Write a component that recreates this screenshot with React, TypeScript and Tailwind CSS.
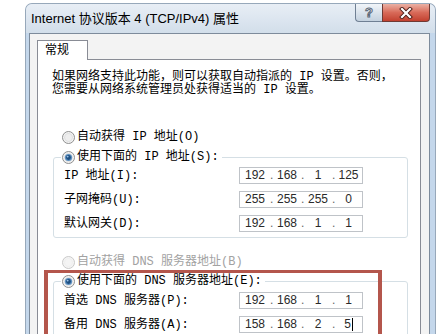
import React from 'react'

// SimSun-like mix: mono latin + CJK
const bodyFont = "font-['Liberation_Mono','Noto_Sans_CJK_SC',monospace]"

function Radio({ checked, disabled }: { checked?: boolean; disabled?: boolean }) {
  const ring = disabled ? '#c9c9c9' : '#8e8f8f'
  return (
    <svg width="13" height="13" viewBox="0 0 13 13" className="shrink-0">
      <circle cx="6.5" cy="6.5" r="6" fill={disabled ? '#f4f4f4' : '#f2f2f2'} stroke={ring} strokeWidth="1" />
      <circle cx="6.5" cy="6.5" r="4.2" fill={disabled ? '#ededed' : '#d9dadb'} />
      <circle cx="6.5" cy="6.5" r="3.4" fill={disabled ? '#f4f4f4' : '#eeeeee'} />
      {checked && (
        <>
          <circle cx="6.5" cy="6.5" r="3.6" fill="#5b8fc0" />
          <circle cx="6.5" cy="6.5" r="2.4" fill="#1f4f80" />
          <circle cx="5.7" cy="5.6" r="0.9" fill="#9cc2e6" />
        </>
      )}
    </svg>
  )
}

function IpBox({ parts, caret }: { parts: string[]; caret?: boolean }) {
  const widths = ['w-[30px]', 'w-[28px]', 'w-[28px]', 'w-[27px]']
  return (
    <div className="flex h-[17px] w-[124px] items-center border border-[#bfc3c8] bg-white font-['Liberation_Sans',sans-serif] text-[12px] leading-[15px] text-[#2a2a2a]">
      {parts.map((p, i) => (
        <React.Fragment key={i}>
          {i > 0 && <span className="w-[3px] text-center text-[#666]">.</span>}
          <span className={`${widths[i]} text-center`}>
            {p}
            {caret && i === 3 && <span className="ml-[1px] inline-block h-[13px] w-px bg-black align-middle" />}
          </span>
        </React.Fragment>
      ))}
    </div>
  )
}

function Row({ label, parts, caret }: { label: string; parts: string[]; caret?: boolean }) {
  return (
    <div className="flex h-[17px] items-center">
      <div className="w-[175px] leading-[12px]">{label}</div>
      <IpBox parts={parts} caret={caret} />
    </div>
  )
}

function Group({ title, children }: { title: string; children: React.ReactNode }) {
  return (
    <fieldset className="ml-[15px] w-[355px] rounded-[3px] border border-[#d5dfe5] pb-[5px]">
      <legend className="ml-[7px] px-[1px]">
        <div className="flex h-[16px] items-center gap-[2px] pr-[2px]">
          <Radio checked />
          <span className="leading-[12px]">{title}</span>
        </div>
      </legend>
      {children}
    </fieldset>
  )
}

export default function App() {
  return (
    <div className={`relative h-[334px] w-[441px] overflow-hidden bg-white text-[12px] text-black ${bodyFont}`}>
      {/* Window */}
      <div className="ml-[25px] mt-[3px] w-[411px] rounded-t-[7px] border-x border-t border-[#97a8ba] bg-[#c4d7eb]">
        {/* Title bar */}
        <div className="flex h-[29px] items-start justify-between rounded-t-[6px] bg-gradient-to-b from-[#e8eef5] via-[#dde6f0] to-[#d2deea]">
          <div className="self-center pl-[5px] pt-[1px] font-['Liberation_Sans','Noto_Sans_CJK_SC',sans-serif] text-[13px] text-black">
            Internet 协议版本 4 (TCP/IPv4) 属性
          </div>
          <div className="mr-[5px] flex">
            <div className="flex h-[18px] w-[27px] items-center justify-center rounded-bl-[4px] border-b border-l border-[#6f7f93] bg-gradient-to-b from-[#f1f5f9] to-[#c4d1df]">
              <span className="font-['Liberation_Sans',sans-serif] text-[13px] font-bold leading-none text-white [-webkit-text-stroke:1px_#5b6777]">?</span>
            </div>
            <div className="flex h-[18px] w-[48px] items-center justify-center rounded-br-[4px] border border-t-0 border-[#6f3a34] bg-gradient-to-b from-[#eab0a4] via-[#d86a59] to-[#c2402f]">
              <svg width="14" height="12" viewBox="0 0 14 12">
                <path d="M3 2 L11 10 M11 2 L3 10" stroke="#4a1d18" strokeWidth="4" strokeLinecap="square" />
                <path d="M3 2 L11 10 M11 2 L3 10" stroke="#ffffff" strokeWidth="2.2" strokeLinecap="square" />
              </svg>
            </div>
          </div>
        </div>

        {/* Client area */}
        <div className="pl-[3px] pr-[5px]">
          <div className="h-[310px] border-x border-t border-[#7d8b9b] bg-[#f3f3f3] pl-[7px] pr-[8px] pt-[6px]">
            {/* Tab */}
            <div className="relative z-10 -mb-px flex h-[20px] w-[51px] items-center border-x border-t border-[#898c95] bg-white pl-[7px] leading-[12px]">
              常规
            </div>
            {/* Tab page */}
            <div className="h-[300px] border border-[#898c95] bg-white">
              <p className="ml-[14px] mt-[11px] leading-[13px]">
                如果网络支持此功能，则可以获取自动指派的 IP 设置。否则，
                <br />
                您需要从网络系统管理员处获得适当的 IP 设置。
              </p>

              <div className="ml-[24px] mt-[32px] flex h-[16px] items-center gap-[2px]">
                <Radio />
                <span className="leading-[12px]">自动获得 IP 地址(O)</span>
              </div>

              <div className="mt-[4px]">
                <Group title="使用下面的 IP 地址(S):">
                  <div className="mt-[2px] flex flex-col gap-[7px] pl-[10px]">
                    <Row label="IP 地址(I):" parts={['192', '168', '1', '125']} />
                    <Row label="子网掩码(U):" parts={['255', '255', '255', '0']} />
                    <Row label="默认网关(D):" parts={['192', '168', '1', '1']} />
                  </div>
                </Group>
              </div>

              <div className="ml-[24px] mt-[16px] flex h-[16px] items-center gap-[2px] text-[#a2a2a2]">
                <Radio disabled />
                <span className="leading-[12px]">自动获得 DNS 服务器地址(B)</span>
              </div>

              <div className="mt-[3px]">
                <Group title="使用下面的 DNS 服务器地址(E):">
                  <div className="mt-[3px] flex flex-col gap-[7px] pl-[10px]">
                    <Row label="首选 DNS 服务器(P):" parts={['192', '168', '1', '1']} />
                    <Row label="备用 DNS 服务器(A):" parts={['158', '168', '2', '5']} caret />
                  </div>
                </Group>
              </div>
            </div>
          </div>
        </div>
      </div>

      {/* Red highlight drawn over the screenshot */}
      <div className="absolute left-[44px] top-[270px] h-[100px] w-[338px] border-x-[4px] border-t-[3px] border-[#b4564c]" />
    </div>
  )
}
